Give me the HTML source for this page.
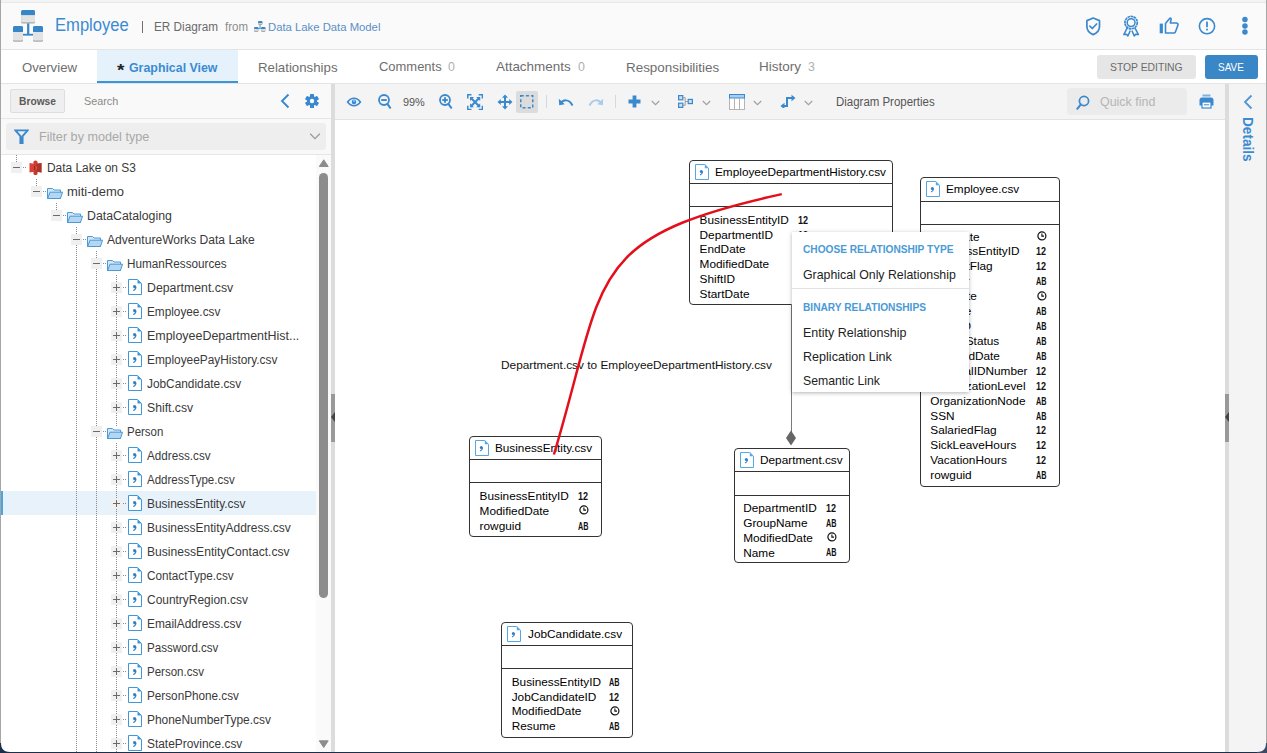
<!DOCTYPE html>
<html><head><meta charset="utf-8"><style>
html,body{margin:0;padding:0;width:1267px;height:753px;overflow:hidden;background:#fff}
body{position:relative;font-family:"Liberation Sans",sans-serif}
.a{position:absolute;display:block}
.t{position:absolute;white-space:nowrap;transform-origin:0 50%}
</style></head><body>
<div class="a" style="left:0px;top:0px;width:1267px;height:753px;background:#1b2f4a;"></div>
<div class="a" style="left:0;top:0;width:1267px;height:752px;background:#fafafa;border-radius:0 0 8px 8px;overflow:hidden">
<div class="a" style="left:0px;top:0px;width:1267px;height:2px;background:#f3f3f3;"></div>
<div class="a" style="left:0px;top:2px;width:1267px;height:1px;background:#e8e8e8;"></div>
<div class="a" style="left:0px;top:3px;width:1267px;height:46px;background:#fafafa;"></div>
<div class="a" style="left:0px;top:49px;width:1267px;height:1px;background:#e4e4e4;"></div>
<div class="a" style="left:0px;top:50px;width:1267px;height:33px;background:#ffffff;"></div>
<div class="a" style="left:0px;top:83px;width:1267px;height:1px;background:#e4e4e4;"></div>
<div class="a" style="left:0px;top:84px;width:331px;height:34px;background:#f9f9f9;"></div>
<div class="a" style="left:0px;top:118px;width:331px;height:1px;background:#e6e6e6;"></div>
<div class="a" style="left:0px;top:119px;width:331px;height:35px;background:#f9f9f9;"></div>
<div class="a" style="left:0px;top:154px;width:331px;height:1px;background:#e6e6e6;"></div>
<div class="a" style="left:0px;top:155px;width:331px;height:598px;background:#ffffff;"></div>
<div class="a" style="left:331px;top:84px;width:4px;height:669px;background:#dcdcdc;"></div>
<div class="a" style="left:335px;top:84px;width:890px;height:35px;background:#f4f4f4;"></div>
<div class="a" style="left:335px;top:119px;width:890px;height:1px;background:#e2e2e2;"></div>
<div class="a" style="left:335px;top:120px;width:890px;height:633px;background:#ffffff;"></div>
<div class="a" style="left:1225px;top:84px;width:4px;height:669px;background:#dcdcdc;"></div>
<div class="a" style="left:1229px;top:84px;width:38px;height:669px;background:#f4f4f4;"></div>
</div>
<div class="a" style="left:0px;top:0px;width:1px;height:745px;background:#a6a6a6;"></div>
<div class="a" style="left:1266px;top:0px;width:1px;height:745px;background:#a6a6a6;"></div>
<svg class="a" style="left:13px;top:10px;" width="30" height="32" viewBox="0 0 30 32"><rect x="8.2" y="0.1" width="13.8" height="13.3" rx="1.5" fill="#a9a9a9"/><rect x="8.2" y="0.1" width="13.8" height="12.100000000000001" rx="1.5" fill="#e3e3e3"/><path d="M8.2 5.1 h13.8 v-3.5 h-13.8 z" fill="#3786c8"/><rect x="8.2" y="0.1" width="13.8" height="5" rx="1.5" fill="#3786c8"/><rect x="0" y="15.9" width="10" height="15.8" rx="1.5" fill="#a9a9a9"/><rect x="0" y="15.9" width="10" height="14.600000000000001" rx="1.5" fill="#e3e3e3"/><path d="M0 21.9 h10 v-4.5 h-10 z" fill="#3786c8"/><rect x="0" y="15.9" width="10" height="6" rx="1.5" fill="#3786c8"/><rect x="20" y="15.9" width="10" height="15.8" rx="1.5" fill="#a9a9a9"/><rect x="20" y="15.9" width="10" height="14.600000000000001" rx="1.5" fill="#e3e3e3"/><path d="M20 21.9 h10 v-4.5 h-10 z" fill="#3786c8"/><rect x="20" y="15.9" width="10" height="6" rx="1.5" fill="#3786c8"/><rect x="14.1" y="13.4" width="2.2" height="10.6" fill="#3786c8"/><rect x="10" y="23.8" width="10" height="1.8" fill="#3786c8"/></svg>
<div class="t" style="left:55.20px;top:16px;font-size:18.00px;line-height:18.00px;color:#3a8bd2;transform:scaleX(0.9220);">Employee</div>
<div class="a" style="left:142px;top:21px;width:1.2px;height:12px;background:#707070;"></div>
<div class="t" style="left:153.50px;top:21px;font-size:12.50px;line-height:12.50px;color:#6a6a6a;transform:scaleX(0.9402);">ER Diagram</div>
<div class="t" style="left:225.30px;top:21px;font-size:12.20px;line-height:12.20px;color:#8c8c8c;transform:scaleX(0.9426);">from</div>
<svg class="a" style="left:254px;top:20.8px;" width="12" height="12" viewBox="0 0 12 12"><rect x="4" y="0" width="4.5" height="4" rx="1.5" fill="#a9a9a9"/><rect x="4" y="0" width="4.5" height="2.8" rx="1.5" fill="#e3e3e3"/><path d="M4 2 h4.5 v-0.5 h-4.5 z" fill="#3786c8"/><rect x="4" y="0" width="4.5" height="2" rx="1.5" fill="#3786c8"/><rect x="0" y="6" width="4.5" height="5" rx="1.5" fill="#a9a9a9"/><rect x="0" y="6" width="4.5" height="3.8" rx="1.5" fill="#e3e3e3"/><path d="M0 8 h4.5 v-0.5 h-4.5 z" fill="#3786c8"/><rect x="0" y="6" width="4.5" height="2" rx="1.5" fill="#3786c8"/><rect x="7" y="6" width="4.5" height="5" rx="1.5" fill="#a9a9a9"/><rect x="7" y="6" width="4.5" height="3.8" rx="1.5" fill="#e3e3e3"/><path d="M7 8 h4.5 v-0.5 h-4.5 z" fill="#3786c8"/><rect x="7" y="6" width="4.5" height="2" rx="1.5" fill="#3786c8"/><rect x="5.6" y="4" width="0.9" height="3" fill="#3786c8"/><rect x="2" y="7.3" width="7" height="0.8" fill="#3786c8"/></svg>
<div class="t" style="left:267.60px;top:22px;font-size:11.50px;line-height:11.50px;color:#5a8fc6;transform:scaleX(0.9823);">Data Lake Data Model</div>
<svg class="a" style="left:1085px;top:16px;" width="17" height="20" viewBox="0 0 17 20"><path d="M8.2 2 L14.5 4.6 V10.5 C14.5 14.5 11.7 17.2 8.2 18.6 C4.7 17.2 1.9 14.5 1.9 10.5 V4.6 Z" fill="none" stroke="#3a89cf" stroke-width="1.7" stroke-linejoin="round"/><path d="M4.9 10.2 L7.3 12.5 L11.6 8" fill="none" stroke="#3a89cf" stroke-width="1.7" stroke-linecap="round" stroke-linejoin="round"/></svg>
<svg class="a" style="left:1121px;top:15px;" width="20" height="22" viewBox="0 0 20 22"><circle cx="10.1" cy="7.6" r="6.2" fill="none" stroke="#3a89cf" stroke-width="1.7" stroke-dasharray="2.6 0.5"/><circle cx="10.1" cy="7.6" r="3.9" fill="none" stroke="#3a89cf" stroke-width="1.5"/><path d="M6.4 12.6 L2.8 19.6 L5.6 19.2 L6.9 21 L9.3 15.6 M13.8 12.6 L17.4 19.6 L14.6 19.2 L13.3 21 L10.9 15.6" fill="none" stroke="#3a89cf" stroke-width="1.5" stroke-linejoin="round"/></svg>
<svg class="a" style="left:1159px;top:16px;" width="21" height="19" viewBox="0 0 21 19"><rect x="0.7" y="7.6" width="3.2" height="9.7" fill="#3a89cf"/><path d="M6.5 17 V7.6 L10.6 2.6 C11.3 1.8 12.3 2.3 12.1 3.4 L11.4 7 H17.3 C18.6 7 19.3 8.2 18.9 9.3 L16.3 16.2 C16 16.8 15.5 17 14.9 17 Z" fill="none" stroke="#3a89cf" stroke-width="1.6" stroke-linejoin="round"/></svg>
<svg class="a" style="left:1197px;top:16px;" width="20" height="20" viewBox="0 0 20 20"><circle cx="10" cy="10.2" r="7.6" fill="none" stroke="#3a89cf" stroke-width="1.6"/><rect x="9.1" y="5.6" width="1.8" height="5.6" rx="0.5" fill="#3a89cf"/><rect x="9.1" y="12.6" width="1.8" height="1.8" rx="0.5" fill="#3a89cf"/></svg>
<svg class="a" style="left:1240px;top:15px;" width="10" height="22" viewBox="0 0 10 22"><circle cx="4.95" cy="4.6" r="2.75" fill="#3a89cf"/><circle cx="4.95" cy="10.9" r="2.75" fill="#3a89cf"/><circle cx="4.95" cy="17.1" r="2.75" fill="#3a89cf"/></svg>
<div class="a" style="left:97px;top:50px;width:141px;height:33px;background:#e6f2fb;"></div>
<div class="a" style="left:97px;top:81px;width:141px;height:2px;background:#3d95d8;"></div>
<div class="t" style="left:21.70px;top:61px;font-size:13.00px;line-height:13.00px;color:#6e6e6e;transform:scaleX(1.0152);">Overview</div>
<div class="t" style="left:116.80px;top:63px;font-size:16.00px;line-height:16.00px;color:#222;font-weight:bold;transform:scaleX(1.1885);">*</div>
<div class="t" style="left:129.30px;top:61px;font-size:13.00px;line-height:13.00px;color:#3a8bd2;font-weight:bold;transform:scaleX(0.9517);">Graphical View</div>
<div class="t" style="left:258.30px;top:61px;font-size:13.00px;line-height:13.00px;color:#6e6e6e;transform:scaleX(1.0187);">Relationships</div>
<div class="t" style="left:379.20px;top:60px;font-size:13.00px;line-height:13.00px;color:#6e6e6e;transform:scaleX(0.9961);">Comments</div>
<div class="t" style="left:448.30px;top:60px;font-size:13.00px;line-height:13.00px;color:#b0b0b0;transform:scaleX(0.9544);">0</div>
<div class="t" style="left:495.90px;top:60px;font-size:13.00px;line-height:13.00px;color:#6e6e6e;transform:scaleX(1.0324);">Attachments</div>
<div class="t" style="left:578.00px;top:60px;font-size:13.00px;line-height:13.00px;color:#b0b0b0;transform:scaleX(0.9544);">0</div>
<div class="t" style="left:625.50px;top:61px;font-size:13.00px;line-height:13.00px;color:#6e6e6e;transform:scaleX(1.0319);">Responsibilities</div>
<div class="t" style="left:759.20px;top:60px;font-size:13.00px;line-height:13.00px;color:#6e6e6e;transform:scaleX(1.0384);">History</div>
<div class="t" style="left:808.00px;top:60px;font-size:13.00px;line-height:13.00px;color:#b0b0b0;transform:scaleX(0.9544);">3</div>
<div class="a" style="left:1097px;top:55px;width:99px;height:24px;background:#e6e6e6;border-radius:3px;"></div>
<div class="t" style="left:1110.30px;top:62px;font-size:11.50px;line-height:11.50px;color:#6b6b6b;transform:scaleX(0.8996);">STOP EDITING</div>
<div class="a" style="left:1205px;top:55px;width:53px;height:24px;background:#3a87c7;border-radius:3px;"></div>
<div class="t" style="left:1217.80px;top:62px;font-size:11.50px;line-height:11.50px;color:#ffffff;transform:scaleX(0.8670);">SAVE</div>
<div class="a" style="left:10px;top:89px;width:55px;height:24px;background:#efefef;border:1px solid #dedede;box-sizing:border-box;border-radius:2px;"></div>
<div class="t" style="left:19.00px;top:96px;font-size:11.50px;line-height:11.50px;color:#5a5a5a;font-weight:bold;transform:scaleX(0.8907);">Browse</div>
<div class="t" style="left:83.90px;top:96px;font-size:11.50px;line-height:11.50px;color:#8a8a8a;transform:scaleX(0.9413);">Search</div>
<svg class="a" style="left:279px;top:92px;" width="12" height="18" viewBox="0 0 12 18"><path d="M9.5 2.5 L3 9 L9.5 15.5" fill="none" stroke="#3a89cf" stroke-width="1.9" stroke-linejoin="miter"/></svg>
<svg class="a" style="left:305px;top:94px;" width="14" height="14" viewBox="0 0 14 14"><g transform="translate(7,7)"><rect x="-2" y="-7" width="4" height="4" rx="0.5" fill="#3a89cf" transform="rotate(0)"/><rect x="-2" y="-7" width="4" height="4" rx="0.5" fill="#3a89cf" transform="rotate(60)"/><rect x="-2" y="-7" width="4" height="4" rx="0.5" fill="#3a89cf" transform="rotate(120)"/><rect x="-2" y="-7" width="4" height="4" rx="0.5" fill="#3a89cf" transform="rotate(180)"/><rect x="-2" y="-7" width="4" height="4" rx="0.5" fill="#3a89cf" transform="rotate(240)"/><rect x="-2" y="-7" width="4" height="4" rx="0.5" fill="#3a89cf" transform="rotate(300)"/><circle r="5.1" fill="#3a89cf"/><circle r="2.2" fill="#f9f9f9"/></g></svg>
<div class="a" style="left:6px;top:123px;width:320px;height:27px;background:#eeeeee;border-radius:3px;"></div>
<svg class="a" style="left:13.5px;top:128.5px;" width="15" height="15" viewBox="0 0 15 15"><path d="M1.4 1.4 H13.6 L8.6 7.2 V14 H6.4 V7.2 Z" fill="none" stroke="#3a89cf" stroke-width="1.9" stroke-linejoin="miter"/><rect x="6.4" y="7.5" width="2.2" height="6.5" fill="#3a89cf"/></svg>
<div class="t" style="left:38.50px;top:131px;font-size:12.20px;line-height:12.20px;color:#a8a8a8;transform:scaleX(1.0371);">Filter by model type</div>
<svg class="a" style="left:309px;top:132px;" width="12" height="9" viewBox="0 0 12 9"><path d="M1.2 1.8 L6 6.6 L10.8 1.8" fill="none" stroke="#9a9a9a" stroke-width="1.3"/></svg>
<div class="a" style="left:3px;top:491px;width:313px;height:24px;background:#e7f2fb;"></div>
<div class="a" style="left:1px;top:491px;width:2px;height:24px;background:#4aa6df;"></div>
<div class="a" style="left:16px;top:155px;width:1px;height:7px;background:repeating-linear-gradient(to bottom,#8a8a8a 0,#8a8a8a 1px,transparent 1px,transparent 2px)"></div>
<div class="a" style="left:36px;top:179px;width:1px;height:7px;background:repeating-linear-gradient(to bottom,#8a8a8a 0,#8a8a8a 1px,transparent 1px,transparent 2px)"></div>
<div class="a" style="left:56px;top:203px;width:1px;height:7px;background:repeating-linear-gradient(to bottom,#8a8a8a 0,#8a8a8a 1px,transparent 1px,transparent 2px)"></div>
<div class="a" style="left:76px;top:227px;width:1px;height:7px;background:repeating-linear-gradient(to bottom,#8a8a8a 0,#8a8a8a 1px,transparent 1px,transparent 2px)"></div>
<div class="a" style="left:76px;top:245px;width:1px;height:508px;background:repeating-linear-gradient(to bottom,#8a8a8a 0,#8a8a8a 1px,transparent 1px,transparent 2px)"></div>
<div class="a" style="left:96px;top:251px;width:1px;height:7px;background:repeating-linear-gradient(to bottom,#8a8a8a 0,#8a8a8a 1px,transparent 1px,transparent 2px)"></div>
<div class="a" style="left:96px;top:269px;width:1px;height:484px;background:repeating-linear-gradient(to bottom,#8a8a8a 0,#8a8a8a 1px,transparent 1px,transparent 2px)"></div>
<div class="a" style="left:116px;top:275px;width:1px;height:151px;background:repeating-linear-gradient(to bottom,#8a8a8a 0,#8a8a8a 1px,transparent 1px,transparent 2px)"></div>
<div class="a" style="left:116px;top:443px;width:1px;height:310px;background:repeating-linear-gradient(to bottom,#8a8a8a 0,#8a8a8a 1px,transparent 1px,transparent 2px)"></div>
<div class="a" style="left:11px;top:162.0px;width:11px;height:11px;background:#f0f0f0;"></div>
<div class="a" style="left:13px;top:167.0px;width:7px;height:1px;background:#6a6a6a;"></div>
<div class="a" style="left:23px;top:167px;width:4px;height:1px;background:repeating-linear-gradient(to right,#8a8a8a 0,#8a8a8a 1px,transparent 1px,transparent 2px)"></div>
<svg class="a" style="left:28.5px;top:159.5px;" width="14" height="16" viewBox="0 0 14 16"><path d="M0.5 3 Q6.5 4.6 12.5 3 V12.5 Q6.5 10.9 0.5 12.5 Z" fill="#d8413a"/><path d="M6.5 3.8 Q9.5 3.8 12.5 3 V12.5 Q9.5 11.7 6.5 11.7 Z" fill="#a9342b"/><circle cx="6.5" cy="2.7" r="2.2" fill="#cf3b33"/><circle cx="6.5" cy="12.9" r="2.2" fill="#c4372f"/><path d="M5 5.8 h3.2 v4 h-3.2 z" fill="#8f2a22"/><path d="M6.3 5.8 h1.9 v4 h-1.9 z" fill="#e2493f"/></svg>
<div class="t" style="left:46.70px;top:162px;font-size:12.00px;line-height:12.00px;color:#3a3a3a;transform:scaleX(0.9933);">Data Lake on S3</div>
<div class="a" style="left:31px;top:186.0px;width:11px;height:11px;background:#f0f0f0;"></div>
<div class="a" style="left:33px;top:191.0px;width:7px;height:1px;background:#6a6a6a;"></div>
<div class="a" style="left:43px;top:191px;width:4px;height:1px;background:repeating-linear-gradient(to right,#8a8a8a 0,#8a8a8a 1px,transparent 1px,transparent 2px)"></div>
<svg class="a" style="left:47px;top:186.5px;" width="16" height="12" viewBox="0 0 16 12"><path d="M0.5 1.5 H5.5 L7 3 H13.5 V11.5 H0.5 Z" fill="#d3e6f6" stroke="#4a9ad8" stroke-width="1" stroke-linejoin="round"/><path d="M3 5.2 H15.6 L13.4 11.5 H0.6 Z" fill="#b5d6f2" stroke="#4a9ad8" stroke-width="1" stroke-linejoin="round"/></svg>
<div class="t" style="left:66.70px;top:186px;font-size:12.00px;line-height:12.00px;color:#3a3a3a;transform:scaleX(1.0821);">miti-demo</div>
<div class="a" style="left:51px;top:210.0px;width:11px;height:11px;background:#f0f0f0;"></div>
<div class="a" style="left:53px;top:215.0px;width:7px;height:1px;background:#6a6a6a;"></div>
<div class="a" style="left:63px;top:215px;width:4px;height:1px;background:repeating-linear-gradient(to right,#8a8a8a 0,#8a8a8a 1px,transparent 1px,transparent 2px)"></div>
<svg class="a" style="left:67px;top:210.5px;" width="16" height="12" viewBox="0 0 16 12"><path d="M0.5 1.5 H5.5 L7 3 H13.5 V11.5 H0.5 Z" fill="#d3e6f6" stroke="#4a9ad8" stroke-width="1" stroke-linejoin="round"/><path d="M3 5.2 H15.6 L13.4 11.5 H0.6 Z" fill="#b5d6f2" stroke="#4a9ad8" stroke-width="1" stroke-linejoin="round"/></svg>
<div class="t" style="left:86.70px;top:210px;font-size:12.00px;line-height:12.00px;color:#3a3a3a;transform:scaleX(1.0263);">DataCataloging</div>
<div class="a" style="left:71px;top:234.0px;width:11px;height:11px;background:#f0f0f0;"></div>
<div class="a" style="left:73px;top:239.0px;width:7px;height:1px;background:#6a6a6a;"></div>
<div class="a" style="left:83px;top:239px;width:4px;height:1px;background:repeating-linear-gradient(to right,#8a8a8a 0,#8a8a8a 1px,transparent 1px,transparent 2px)"></div>
<svg class="a" style="left:87px;top:234.5px;" width="16" height="12" viewBox="0 0 16 12"><path d="M0.5 1.5 H5.5 L7 3 H13.5 V11.5 H0.5 Z" fill="#d3e6f6" stroke="#4a9ad8" stroke-width="1" stroke-linejoin="round"/><path d="M3 5.2 H15.6 L13.4 11.5 H0.6 Z" fill="#b5d6f2" stroke="#4a9ad8" stroke-width="1" stroke-linejoin="round"/></svg>
<div class="t" style="left:106.70px;top:234px;font-size:12.00px;line-height:12.00px;color:#3a3a3a;transform:scaleX(1.0079);">AdventureWorks Data Lake</div>
<div class="a" style="left:91px;top:258.0px;width:11px;height:11px;background:#f0f0f0;"></div>
<div class="a" style="left:93px;top:263.0px;width:7px;height:1px;background:#6a6a6a;"></div>
<div class="a" style="left:103px;top:263px;width:4px;height:1px;background:repeating-linear-gradient(to right,#8a8a8a 0,#8a8a8a 1px,transparent 1px,transparent 2px)"></div>
<svg class="a" style="left:107px;top:258.5px;" width="16" height="12" viewBox="0 0 16 12"><path d="M0.5 1.5 H5.5 L7 3 H13.5 V11.5 H0.5 Z" fill="#d3e6f6" stroke="#4a9ad8" stroke-width="1" stroke-linejoin="round"/><path d="M3 5.2 H15.6 L13.4 11.5 H0.6 Z" fill="#b5d6f2" stroke="#4a9ad8" stroke-width="1" stroke-linejoin="round"/></svg>
<div class="t" style="left:126.70px;top:258px;font-size:12.00px;line-height:12.00px;color:#3a3a3a;transform:scaleX(0.9771);">HumanRessources</div>
<div class="a" style="left:111px;top:282.0px;width:11px;height:11px;background:#f0f0f0;"></div>
<div class="a" style="left:113px;top:287.0px;width:7px;height:1px;background:#6a6a6a;"></div>
<div class="a" style="left:116px;top:284.0px;width:1px;height:7px;background:#6a6a6a;"></div>
<div class="a" style="left:123px;top:287px;width:4px;height:1px;background:repeating-linear-gradient(to right,#8a8a8a 0,#8a8a8a 1px,transparent 1px,transparent 2px)"></div>
<svg class="a" style="left:128px;top:279.0px;" width="14" height="16" viewBox="0 0 14 16"><path d="M0.5 0.5 H9.5 L13.5 4.5 V15.5 H0.5 Z" fill="#fff" stroke="#3d97d9" stroke-width="1"/><path d="M9.5 0.5 L13.5 4.5 H9.5 Z" fill="#3d97d9"/><circle cx="6.6" cy="7.6" r="1.6" fill="#2f7fc4"/><path d="M7.9 8 C7.8 10 6.8 11 5.2 11.5" fill="none" stroke="#2f7fc4" stroke-width="1.2"/></svg>
<div class="t" style="left:146.70px;top:282px;font-size:12.00px;line-height:12.00px;color:#3a3a3a;transform:scaleX(1.0258);">Department.csv</div>
<div class="a" style="left:111px;top:306.0px;width:11px;height:11px;background:#f0f0f0;"></div>
<div class="a" style="left:113px;top:311.0px;width:7px;height:1px;background:#6a6a6a;"></div>
<div class="a" style="left:116px;top:308.0px;width:1px;height:7px;background:#6a6a6a;"></div>
<div class="a" style="left:123px;top:311px;width:4px;height:1px;background:repeating-linear-gradient(to right,#8a8a8a 0,#8a8a8a 1px,transparent 1px,transparent 2px)"></div>
<svg class="a" style="left:128px;top:303.0px;" width="14" height="16" viewBox="0 0 14 16"><path d="M0.5 0.5 H9.5 L13.5 4.5 V15.5 H0.5 Z" fill="#fff" stroke="#3d97d9" stroke-width="1"/><path d="M9.5 0.5 L13.5 4.5 H9.5 Z" fill="#3d97d9"/><circle cx="6.6" cy="7.6" r="1.6" fill="#2f7fc4"/><path d="M7.9 8 C7.8 10 6.8 11 5.2 11.5" fill="none" stroke="#2f7fc4" stroke-width="1.2"/></svg>
<div class="t" style="left:146.70px;top:306px;font-size:12.00px;line-height:12.00px;color:#3a3a3a;transform:scaleX(0.9813);">Employee.csv</div>
<div class="a" style="left:111px;top:330.0px;width:11px;height:11px;background:#f0f0f0;"></div>
<div class="a" style="left:113px;top:335.0px;width:7px;height:1px;background:#6a6a6a;"></div>
<div class="a" style="left:116px;top:332.0px;width:1px;height:7px;background:#6a6a6a;"></div>
<div class="a" style="left:123px;top:335px;width:4px;height:1px;background:repeating-linear-gradient(to right,#8a8a8a 0,#8a8a8a 1px,transparent 1px,transparent 2px)"></div>
<svg class="a" style="left:128px;top:327.0px;" width="14" height="16" viewBox="0 0 14 16"><path d="M0.5 0.5 H9.5 L13.5 4.5 V15.5 H0.5 Z" fill="#fff" stroke="#3d97d9" stroke-width="1"/><path d="M9.5 0.5 L13.5 4.5 H9.5 Z" fill="#3d97d9"/><circle cx="6.6" cy="7.6" r="1.6" fill="#2f7fc4"/><path d="M7.9 8 C7.8 10 6.8 11 5.2 11.5" fill="none" stroke="#2f7fc4" stroke-width="1.2"/></svg>
<div class="t" style="left:146.70px;top:330px;font-size:12.00px;line-height:12.00px;color:#3a3a3a;transform:scaleX(1.0380);">EmployeeDepartmentHist...</div>
<div class="a" style="left:111px;top:354.0px;width:11px;height:11px;background:#f0f0f0;"></div>
<div class="a" style="left:113px;top:359.0px;width:7px;height:1px;background:#6a6a6a;"></div>
<div class="a" style="left:116px;top:356.0px;width:1px;height:7px;background:#6a6a6a;"></div>
<div class="a" style="left:123px;top:359px;width:4px;height:1px;background:repeating-linear-gradient(to right,#8a8a8a 0,#8a8a8a 1px,transparent 1px,transparent 2px)"></div>
<svg class="a" style="left:128px;top:351.0px;" width="14" height="16" viewBox="0 0 14 16"><path d="M0.5 0.5 H9.5 L13.5 4.5 V15.5 H0.5 Z" fill="#fff" stroke="#3d97d9" stroke-width="1"/><path d="M9.5 0.5 L13.5 4.5 H9.5 Z" fill="#3d97d9"/><circle cx="6.6" cy="7.6" r="1.6" fill="#2f7fc4"/><path d="M7.9 8 C7.8 10 6.8 11 5.2 11.5" fill="none" stroke="#2f7fc4" stroke-width="1.2"/></svg>
<div class="t" style="left:146.70px;top:354px;font-size:12.00px;line-height:12.00px;color:#3a3a3a;transform:scaleX(0.9894);">EmployeePayHistory.csv</div>
<div class="a" style="left:111px;top:378.0px;width:11px;height:11px;background:#f0f0f0;"></div>
<div class="a" style="left:113px;top:383.0px;width:7px;height:1px;background:#6a6a6a;"></div>
<div class="a" style="left:116px;top:380.0px;width:1px;height:7px;background:#6a6a6a;"></div>
<div class="a" style="left:123px;top:383px;width:4px;height:1px;background:repeating-linear-gradient(to right,#8a8a8a 0,#8a8a8a 1px,transparent 1px,transparent 2px)"></div>
<svg class="a" style="left:128px;top:375.0px;" width="14" height="16" viewBox="0 0 14 16"><path d="M0.5 0.5 H9.5 L13.5 4.5 V15.5 H0.5 Z" fill="#fff" stroke="#3d97d9" stroke-width="1"/><path d="M9.5 0.5 L13.5 4.5 H9.5 Z" fill="#3d97d9"/><circle cx="6.6" cy="7.6" r="1.6" fill="#2f7fc4"/><path d="M7.9 8 C7.8 10 6.8 11 5.2 11.5" fill="none" stroke="#2f7fc4" stroke-width="1.2"/></svg>
<div class="t" style="left:146.70px;top:378px;font-size:12.00px;line-height:12.00px;color:#3a3a3a;transform:scaleX(0.9875);">JobCandidate.csv</div>
<div class="a" style="left:111px;top:402.0px;width:11px;height:11px;background:#f0f0f0;"></div>
<div class="a" style="left:113px;top:407.0px;width:7px;height:1px;background:#6a6a6a;"></div>
<div class="a" style="left:116px;top:404.0px;width:1px;height:7px;background:#6a6a6a;"></div>
<div class="a" style="left:123px;top:407px;width:4px;height:1px;background:repeating-linear-gradient(to right,#8a8a8a 0,#8a8a8a 1px,transparent 1px,transparent 2px)"></div>
<svg class="a" style="left:128px;top:399.0px;" width="14" height="16" viewBox="0 0 14 16"><path d="M0.5 0.5 H9.5 L13.5 4.5 V15.5 H0.5 Z" fill="#fff" stroke="#3d97d9" stroke-width="1"/><path d="M9.5 0.5 L13.5 4.5 H9.5 Z" fill="#3d97d9"/><circle cx="6.6" cy="7.6" r="1.6" fill="#2f7fc4"/><path d="M7.9 8 C7.8 10 6.8 11 5.2 11.5" fill="none" stroke="#2f7fc4" stroke-width="1.2"/></svg>
<div class="t" style="left:146.70px;top:402px;font-size:12.00px;line-height:12.00px;color:#3a3a3a;transform:scaleX(1.0188);">Shift.csv</div>
<div class="a" style="left:91px;top:426.0px;width:11px;height:11px;background:#f0f0f0;"></div>
<div class="a" style="left:93px;top:431.0px;width:7px;height:1px;background:#6a6a6a;"></div>
<div class="a" style="left:103px;top:431px;width:4px;height:1px;background:repeating-linear-gradient(to right,#8a8a8a 0,#8a8a8a 1px,transparent 1px,transparent 2px)"></div>
<svg class="a" style="left:107px;top:426.5px;" width="16" height="12" viewBox="0 0 16 12"><path d="M0.5 1.5 H5.5 L7 3 H13.5 V11.5 H0.5 Z" fill="#d3e6f6" stroke="#4a9ad8" stroke-width="1" stroke-linejoin="round"/><path d="M3 5.2 H15.6 L13.4 11.5 H0.6 Z" fill="#b5d6f2" stroke="#4a9ad8" stroke-width="1" stroke-linejoin="round"/></svg>
<div class="t" style="left:126.70px;top:426px;font-size:12.00px;line-height:12.00px;color:#3a3a3a;transform:scaleX(0.9547);">Person</div>
<div class="a" style="left:111px;top:450.0px;width:11px;height:11px;background:#f0f0f0;"></div>
<div class="a" style="left:113px;top:455.0px;width:7px;height:1px;background:#6a6a6a;"></div>
<div class="a" style="left:116px;top:452.0px;width:1px;height:7px;background:#6a6a6a;"></div>
<div class="a" style="left:123px;top:455px;width:4px;height:1px;background:repeating-linear-gradient(to right,#8a8a8a 0,#8a8a8a 1px,transparent 1px,transparent 2px)"></div>
<svg class="a" style="left:128px;top:447.0px;" width="14" height="16" viewBox="0 0 14 16"><path d="M0.5 0.5 H9.5 L13.5 4.5 V15.5 H0.5 Z" fill="#fff" stroke="#3d97d9" stroke-width="1"/><path d="M9.5 0.5 L13.5 4.5 H9.5 Z" fill="#3d97d9"/><circle cx="6.6" cy="7.6" r="1.6" fill="#2f7fc4"/><path d="M7.9 8 C7.8 10 6.8 11 5.2 11.5" fill="none" stroke="#2f7fc4" stroke-width="1.2"/></svg>
<div class="t" style="left:146.70px;top:450px;font-size:12.00px;line-height:12.00px;color:#3a3a3a;transform:scaleX(0.9731);">Address.csv</div>
<div class="a" style="left:111px;top:474.0px;width:11px;height:11px;background:#f0f0f0;"></div>
<div class="a" style="left:113px;top:479.0px;width:7px;height:1px;background:#6a6a6a;"></div>
<div class="a" style="left:116px;top:476.0px;width:1px;height:7px;background:#6a6a6a;"></div>
<div class="a" style="left:123px;top:479px;width:4px;height:1px;background:repeating-linear-gradient(to right,#8a8a8a 0,#8a8a8a 1px,transparent 1px,transparent 2px)"></div>
<svg class="a" style="left:128px;top:471.0px;" width="14" height="16" viewBox="0 0 14 16"><path d="M0.5 0.5 H9.5 L13.5 4.5 V15.5 H0.5 Z" fill="#fff" stroke="#3d97d9" stroke-width="1"/><path d="M9.5 0.5 L13.5 4.5 H9.5 Z" fill="#3d97d9"/><circle cx="6.6" cy="7.6" r="1.6" fill="#2f7fc4"/><path d="M7.9 8 C7.8 10 6.8 11 5.2 11.5" fill="none" stroke="#2f7fc4" stroke-width="1.2"/></svg>
<div class="t" style="left:146.70px;top:474px;font-size:12.00px;line-height:12.00px;color:#3a3a3a;transform:scaleX(0.9605);">AddressType.csv</div>
<div class="a" style="left:111px;top:498.0px;width:11px;height:11px;background:#f0f0f0;"></div>
<div class="a" style="left:113px;top:503.0px;width:7px;height:1px;background:#6a6a6a;"></div>
<div class="a" style="left:116px;top:500.0px;width:1px;height:7px;background:#6a6a6a;"></div>
<div class="a" style="left:123px;top:503px;width:4px;height:1px;background:repeating-linear-gradient(to right,#8a8a8a 0,#8a8a8a 1px,transparent 1px,transparent 2px)"></div>
<svg class="a" style="left:128px;top:495.0px;" width="14" height="16" viewBox="0 0 14 16"><path d="M0.5 0.5 H9.5 L13.5 4.5 V15.5 H0.5 Z" fill="#fff" stroke="#3d97d9" stroke-width="1"/><path d="M9.5 0.5 L13.5 4.5 H9.5 Z" fill="#3d97d9"/><circle cx="6.6" cy="7.6" r="1.6" fill="#2f7fc4"/><path d="M7.9 8 C7.8 10 6.8 11 5.2 11.5" fill="none" stroke="#2f7fc4" stroke-width="1.2"/></svg>
<div class="t" style="left:146.70px;top:498px;font-size:12.00px;line-height:12.00px;color:#3a3a3a;transform:scaleX(0.9926);">BusinessEntity.csv</div>
<div class="a" style="left:111px;top:522.0px;width:11px;height:11px;background:#f0f0f0;"></div>
<div class="a" style="left:113px;top:527.0px;width:7px;height:1px;background:#6a6a6a;"></div>
<div class="a" style="left:116px;top:524.0px;width:1px;height:7px;background:#6a6a6a;"></div>
<div class="a" style="left:123px;top:527px;width:4px;height:1px;background:repeating-linear-gradient(to right,#8a8a8a 0,#8a8a8a 1px,transparent 1px,transparent 2px)"></div>
<svg class="a" style="left:128px;top:519.0px;" width="14" height="16" viewBox="0 0 14 16"><path d="M0.5 0.5 H9.5 L13.5 4.5 V15.5 H0.5 Z" fill="#fff" stroke="#3d97d9" stroke-width="1"/><path d="M9.5 0.5 L13.5 4.5 H9.5 Z" fill="#3d97d9"/><circle cx="6.6" cy="7.6" r="1.6" fill="#2f7fc4"/><path d="M7.9 8 C7.8 10 6.8 11 5.2 11.5" fill="none" stroke="#2f7fc4" stroke-width="1.2"/></svg>
<div class="t" style="left:146.70px;top:522px;font-size:12.00px;line-height:12.00px;color:#3a3a3a;transform:scaleX(0.9975);">BusinessEntityAddress.csv</div>
<div class="a" style="left:111px;top:546.0px;width:11px;height:11px;background:#f0f0f0;"></div>
<div class="a" style="left:113px;top:551.0px;width:7px;height:1px;background:#6a6a6a;"></div>
<div class="a" style="left:116px;top:548.0px;width:1px;height:7px;background:#6a6a6a;"></div>
<div class="a" style="left:123px;top:551px;width:4px;height:1px;background:repeating-linear-gradient(to right,#8a8a8a 0,#8a8a8a 1px,transparent 1px,transparent 2px)"></div>
<svg class="a" style="left:128px;top:543.0px;" width="14" height="16" viewBox="0 0 14 16"><path d="M0.5 0.5 H9.5 L13.5 4.5 V15.5 H0.5 Z" fill="#fff" stroke="#3d97d9" stroke-width="1"/><path d="M9.5 0.5 L13.5 4.5 H9.5 Z" fill="#3d97d9"/><circle cx="6.6" cy="7.6" r="1.6" fill="#2f7fc4"/><path d="M7.9 8 C7.8 10 6.8 11 5.2 11.5" fill="none" stroke="#2f7fc4" stroke-width="1.2"/></svg>
<div class="t" style="left:146.70px;top:546px;font-size:12.00px;line-height:12.00px;color:#3a3a3a;transform:scaleX(1.0085);">BusinessEntityContact.csv</div>
<div class="a" style="left:111px;top:570.0px;width:11px;height:11px;background:#f0f0f0;"></div>
<div class="a" style="left:113px;top:575.0px;width:7px;height:1px;background:#6a6a6a;"></div>
<div class="a" style="left:116px;top:572.0px;width:1px;height:7px;background:#6a6a6a;"></div>
<div class="a" style="left:123px;top:575px;width:4px;height:1px;background:repeating-linear-gradient(to right,#8a8a8a 0,#8a8a8a 1px,transparent 1px,transparent 2px)"></div>
<svg class="a" style="left:128px;top:567.0px;" width="14" height="16" viewBox="0 0 14 16"><path d="M0.5 0.5 H9.5 L13.5 4.5 V15.5 H0.5 Z" fill="#fff" stroke="#3d97d9" stroke-width="1"/><path d="M9.5 0.5 L13.5 4.5 H9.5 Z" fill="#3d97d9"/><circle cx="6.6" cy="7.6" r="1.6" fill="#2f7fc4"/><path d="M7.9 8 C7.8 10 6.8 11 5.2 11.5" fill="none" stroke="#2f7fc4" stroke-width="1.2"/></svg>
<div class="t" style="left:146.70px;top:570px;font-size:12.00px;line-height:12.00px;color:#3a3a3a;transform:scaleX(0.9769);">ContactType.csv</div>
<div class="a" style="left:111px;top:594.0px;width:11px;height:11px;background:#f0f0f0;"></div>
<div class="a" style="left:113px;top:599.0px;width:7px;height:1px;background:#6a6a6a;"></div>
<div class="a" style="left:116px;top:596.0px;width:1px;height:7px;background:#6a6a6a;"></div>
<div class="a" style="left:123px;top:599px;width:4px;height:1px;background:repeating-linear-gradient(to right,#8a8a8a 0,#8a8a8a 1px,transparent 1px,transparent 2px)"></div>
<svg class="a" style="left:128px;top:591.0px;" width="14" height="16" viewBox="0 0 14 16"><path d="M0.5 0.5 H9.5 L13.5 4.5 V15.5 H0.5 Z" fill="#fff" stroke="#3d97d9" stroke-width="1"/><path d="M9.5 0.5 L13.5 4.5 H9.5 Z" fill="#3d97d9"/><circle cx="6.6" cy="7.6" r="1.6" fill="#2f7fc4"/><path d="M7.9 8 C7.8 10 6.8 11 5.2 11.5" fill="none" stroke="#2f7fc4" stroke-width="1.2"/></svg>
<div class="t" style="left:146.70px;top:594px;font-size:12.00px;line-height:12.00px;color:#3a3a3a;transform:scaleX(0.9953);">CountryRegion.csv</div>
<div class="a" style="left:111px;top:618.0px;width:11px;height:11px;background:#f0f0f0;"></div>
<div class="a" style="left:113px;top:623.0px;width:7px;height:1px;background:#6a6a6a;"></div>
<div class="a" style="left:116px;top:620.0px;width:1px;height:7px;background:#6a6a6a;"></div>
<div class="a" style="left:123px;top:623px;width:4px;height:1px;background:repeating-linear-gradient(to right,#8a8a8a 0,#8a8a8a 1px,transparent 1px,transparent 2px)"></div>
<svg class="a" style="left:128px;top:615.0px;" width="14" height="16" viewBox="0 0 14 16"><path d="M0.5 0.5 H9.5 L13.5 4.5 V15.5 H0.5 Z" fill="#fff" stroke="#3d97d9" stroke-width="1"/><path d="M9.5 0.5 L13.5 4.5 H9.5 Z" fill="#3d97d9"/><circle cx="6.6" cy="7.6" r="1.6" fill="#2f7fc4"/><path d="M7.9 8 C7.8 10 6.8 11 5.2 11.5" fill="none" stroke="#2f7fc4" stroke-width="1.2"/></svg>
<div class="t" style="left:146.70px;top:618px;font-size:12.00px;line-height:12.00px;color:#3a3a3a;transform:scaleX(0.9899);">EmailAddress.csv</div>
<div class="a" style="left:111px;top:642.0px;width:11px;height:11px;background:#f0f0f0;"></div>
<div class="a" style="left:113px;top:647.0px;width:7px;height:1px;background:#6a6a6a;"></div>
<div class="a" style="left:116px;top:644.0px;width:1px;height:7px;background:#6a6a6a;"></div>
<div class="a" style="left:123px;top:647px;width:4px;height:1px;background:repeating-linear-gradient(to right,#8a8a8a 0,#8a8a8a 1px,transparent 1px,transparent 2px)"></div>
<svg class="a" style="left:128px;top:639.0px;" width="14" height="16" viewBox="0 0 14 16"><path d="M0.5 0.5 H9.5 L13.5 4.5 V15.5 H0.5 Z" fill="#fff" stroke="#3d97d9" stroke-width="1"/><path d="M9.5 0.5 L13.5 4.5 H9.5 Z" fill="#3d97d9"/><circle cx="6.6" cy="7.6" r="1.6" fill="#2f7fc4"/><path d="M7.9 8 C7.8 10 6.8 11 5.2 11.5" fill="none" stroke="#2f7fc4" stroke-width="1.2"/></svg>
<div class="t" style="left:146.70px;top:642px;font-size:12.00px;line-height:12.00px;color:#3a3a3a;transform:scaleX(0.9646);">Password.csv</div>
<div class="a" style="left:111px;top:666.0px;width:11px;height:11px;background:#f0f0f0;"></div>
<div class="a" style="left:113px;top:671.0px;width:7px;height:1px;background:#6a6a6a;"></div>
<div class="a" style="left:116px;top:668.0px;width:1px;height:7px;background:#6a6a6a;"></div>
<div class="a" style="left:123px;top:671px;width:4px;height:1px;background:repeating-linear-gradient(to right,#8a8a8a 0,#8a8a8a 1px,transparent 1px,transparent 2px)"></div>
<svg class="a" style="left:128px;top:663.0px;" width="14" height="16" viewBox="0 0 14 16"><path d="M0.5 0.5 H9.5 L13.5 4.5 V15.5 H0.5 Z" fill="#fff" stroke="#3d97d9" stroke-width="1"/><path d="M9.5 0.5 L13.5 4.5 H9.5 Z" fill="#3d97d9"/><circle cx="6.6" cy="7.6" r="1.6" fill="#2f7fc4"/><path d="M7.9 8 C7.8 10 6.8 11 5.2 11.5" fill="none" stroke="#2f7fc4" stroke-width="1.2"/></svg>
<div class="t" style="left:146.70px;top:666px;font-size:12.00px;line-height:12.00px;color:#3a3a3a;transform:scaleX(0.9603);">Person.csv</div>
<div class="a" style="left:111px;top:690.0px;width:11px;height:11px;background:#f0f0f0;"></div>
<div class="a" style="left:113px;top:695.0px;width:7px;height:1px;background:#6a6a6a;"></div>
<div class="a" style="left:116px;top:692.0px;width:1px;height:7px;background:#6a6a6a;"></div>
<div class="a" style="left:123px;top:695px;width:4px;height:1px;background:repeating-linear-gradient(to right,#8a8a8a 0,#8a8a8a 1px,transparent 1px,transparent 2px)"></div>
<svg class="a" style="left:128px;top:687.0px;" width="14" height="16" viewBox="0 0 14 16"><path d="M0.5 0.5 H9.5 L13.5 4.5 V15.5 H0.5 Z" fill="#fff" stroke="#3d97d9" stroke-width="1"/><path d="M9.5 0.5 L13.5 4.5 H9.5 Z" fill="#3d97d9"/><circle cx="6.6" cy="7.6" r="1.6" fill="#2f7fc4"/><path d="M7.9 8 C7.8 10 6.8 11 5.2 11.5" fill="none" stroke="#2f7fc4" stroke-width="1.2"/></svg>
<div class="t" style="left:146.70px;top:690px;font-size:12.00px;line-height:12.00px;color:#3a3a3a;transform:scaleX(0.9771);">PersonPhone.csv</div>
<div class="a" style="left:111px;top:714.0px;width:11px;height:11px;background:#f0f0f0;"></div>
<div class="a" style="left:113px;top:719.0px;width:7px;height:1px;background:#6a6a6a;"></div>
<div class="a" style="left:116px;top:716.0px;width:1px;height:7px;background:#6a6a6a;"></div>
<div class="a" style="left:123px;top:719px;width:4px;height:1px;background:repeating-linear-gradient(to right,#8a8a8a 0,#8a8a8a 1px,transparent 1px,transparent 2px)"></div>
<svg class="a" style="left:128px;top:711.0px;" width="14" height="16" viewBox="0 0 14 16"><path d="M0.5 0.5 H9.5 L13.5 4.5 V15.5 H0.5 Z" fill="#fff" stroke="#3d97d9" stroke-width="1"/><path d="M9.5 0.5 L13.5 4.5 H9.5 Z" fill="#3d97d9"/><circle cx="6.6" cy="7.6" r="1.6" fill="#2f7fc4"/><path d="M7.9 8 C7.8 10 6.8 11 5.2 11.5" fill="none" stroke="#2f7fc4" stroke-width="1.2"/></svg>
<div class="t" style="left:146.70px;top:714px;font-size:12.00px;line-height:12.00px;color:#3a3a3a;transform:scaleX(0.9937);">PhoneNumberType.csv</div>
<div class="a" style="left:111px;top:738.0px;width:11px;height:11px;background:#f0f0f0;"></div>
<div class="a" style="left:113px;top:743.0px;width:7px;height:1px;background:#6a6a6a;"></div>
<div class="a" style="left:116px;top:740.0px;width:1px;height:7px;background:#6a6a6a;"></div>
<div class="a" style="left:123px;top:743px;width:4px;height:1px;background:repeating-linear-gradient(to right,#8a8a8a 0,#8a8a8a 1px,transparent 1px,transparent 2px)"></div>
<svg class="a" style="left:128px;top:735.0px;" width="14" height="16" viewBox="0 0 14 16"><path d="M0.5 0.5 H9.5 L13.5 4.5 V15.5 H0.5 Z" fill="#fff" stroke="#3d97d9" stroke-width="1"/><path d="M9.5 0.5 L13.5 4.5 H9.5 Z" fill="#3d97d9"/><circle cx="6.6" cy="7.6" r="1.6" fill="#2f7fc4"/><path d="M7.9 8 C7.8 10 6.8 11 5.2 11.5" fill="none" stroke="#2f7fc4" stroke-width="1.2"/></svg>
<div class="t" style="left:146.70px;top:738px;font-size:12.00px;line-height:12.00px;color:#3a3a3a;transform:scaleX(0.9923);">StateProvince.csv</div>
<div class="a" style="left:316px;top:155px;width:15px;height:598px;background:#fafafa;"></div>
<svg class="a" style="left:318px;top:158px;" width="12" height="10" viewBox="0 0 12 10"><path d="M5.75 1.8 L10.2 8.5 H1.3 Z" fill="#8c8c8c" stroke="#8c8c8c" stroke-width="1" stroke-linejoin="round"/></svg>
<div class="a" style="left:319px;top:173px;width:9px;height:425px;background:#8c8c8c;border-radius:4.5px;"></div>
<svg class="a" style="left:318px;top:739px;" width="12" height="10" viewBox="0 0 12 10"><path d="M5.75 8.5 L10.2 1.8 H1.3 Z" fill="#8c8c8c" stroke="#8c8c8c" stroke-width="1" stroke-linejoin="round"/></svg>
<svg class="a" style="left:346px;top:96px;" width="16" height="12" viewBox="0 0 16 12"><path d="M1.6 5.9 C3.6 3.2 5.6 2.2 8 2.2 C10.4 2.2 12.4 3.2 14.4 5.9 C12.4 8.6 10.4 9.6 8 9.6 C5.6 9.6 3.6 8.6 1.6 5.9 Z" fill="none" stroke="#3a89cf" stroke-width="1.6"/><circle cx="8" cy="5.9" r="2.3" fill="#3a89cf"/><path d="M7 4.3 L8 5.6 L9.3 4" fill="none" stroke="#f4f4f4" stroke-width="0.7"/></svg>
<svg class="a" style="left:378px;top:94px;" width="15" height="15" viewBox="0 0 15 15"><circle cx="6" cy="6" r="5" fill="none" stroke="#3a89cf" stroke-width="1.8"/><path d="M9.4 9.9 L12.2 13.8" stroke="#3a89cf" stroke-width="2" stroke-linecap="round"/><rect x="3.2" y="5.1" width="5.6" height="1.9" fill="#3a89cf"/></svg>
<div class="t" style="left:403.20px;top:97px;font-size:11.80px;line-height:11.80px;color:#555;transform:scaleX(0.9231);">99%</div>
<svg class="a" style="left:439px;top:94px;" width="15" height="15" viewBox="0 0 15 15"><circle cx="6" cy="6" r="5" fill="none" stroke="#3a89cf" stroke-width="1.8"/><path d="M9.4 9.9 L12.2 13.8" stroke="#3a89cf" stroke-width="2" stroke-linecap="round"/><rect x="3.2" y="5.1" width="5.6" height="1.9" fill="#3a89cf"/><rect x="5.05" y="3.2" width="1.9" height="5.6" fill="#3a89cf"/></svg>
<svg class="a" style="left:467px;top:94px;" width="16.2" height="16.2" viewBox="0 0 16.2 16.2"><path d="M0.8 4.5 V0.8 H4.5 M11.7 0.8 H15.4 V4.5 M15.4 11.7 V15.4 H11.7 M4.5 15.4 H0.8 V11.7" fill="none" stroke="#3a89cf" stroke-width="1.5"/><path d="M3.5 3.5 L12.7 12.7 M12.7 3.5 L3.5 12.7" stroke="#3a89cf" stroke-width="2"/><path d="M3 3 H7 L3 7 Z M13.2 3 V7 L9.2 3 Z M13.2 13.2 H9.2 L13.2 9.2 Z M3 13.2 V9.2 L7 13.2 Z" fill="#3a89cf"/></svg>
<svg class="a" style="left:497px;top:94px;" width="16" height="16" viewBox="0 0 16 16"><path d="M8 0.5 L11 3.8 H9 V7 H12.2 V5 L15.5 8 L12.2 11 V9 H9 V12.2 H11 L8 15.5 L5 12.2 H7 V9 H3.8 V11 L0.5 8 L3.8 5 V7 H7 V3.8 H5 Z" fill="#3a89cf"/></svg>
<div class="a" style="left:516px;top:91px;width:22px;height:22px;background:#dcdcdc;border-radius:2px;"></div>
<svg class="a" style="left:520px;top:95px;" width="13.5" height="13.5" viewBox="0 0 13.5 13.5"><rect x="0.75" y="0.75" width="12" height="12" fill="none" stroke="#3a89cf" stroke-width="1.5" stroke-dasharray="3 2.2"/></svg>
<div class="a" style="left:546px;top:95px;width:1px;height:13px;background:#d8d8d8;"></div>
<svg class="a" style="left:558px;top:97px;" width="16" height="10" viewBox="0 0 16 10"><path d="M2.5 6.5 C5 2.5 11 1.5 14.5 8.5" fill="none" stroke="#3a89cf" stroke-width="2"/><path d="M0.8 1.8 L1.2 8.2 L6.8 7.2 Z" fill="#3a89cf"/></svg>
<svg class="a" style="left:588px;top:97px;" width="16" height="10" viewBox="0 0 16 10"><path d="M13.5 6.5 C11 2.5 5 1.5 1.5 8.5" fill="none" stroke="#a7cbe9" stroke-width="2"/><path d="M15.2 1.8 L14.8 8.2 L9.2 7.2 Z" fill="#a7cbe9"/></svg>
<div class="a" style="left:615px;top:95px;width:1px;height:13px;background:#d8d8d8;"></div>
<svg class="a" style="left:628px;top:95px;" width="13" height="13" viewBox="0 0 13 13"><path d="M4.6 0.5 H8.4 V4.6 H12.5 V8.4 H8.4 V12.5 H4.6 V8.4 H0.5 V4.6 H4.6 Z" fill="#3a89cf"/></svg>
<svg class="a" style="left:650.8px;top:99.5px;" width="9" height="6" viewBox="0 0 9 6"><path d="M0.8 1 L4.5 4.6 L8.2 1" fill="none" stroke="#a0a0a0" stroke-width="1.2"/></svg>
<svg class="a" style="left:701.8px;top:99.5px;" width="9" height="6" viewBox="0 0 9 6"><path d="M0.8 1 L4.5 4.6 L8.2 1" fill="none" stroke="#a0a0a0" stroke-width="1.2"/></svg>
<svg class="a" style="left:752.6px;top:99.5px;" width="9" height="6" viewBox="0 0 9 6"><path d="M0.8 1 L4.5 4.6 L8.2 1" fill="none" stroke="#a0a0a0" stroke-width="1.2"/></svg>
<svg class="a" style="left:803.6px;top:99.5px;" width="9" height="6" viewBox="0 0 9 6"><path d="M0.8 1 L4.5 4.6 L8.2 1" fill="none" stroke="#a0a0a0" stroke-width="1.2"/></svg>
<svg class="a" style="left:678px;top:95px;" width="15.5" height="13.5" viewBox="0 0 15.5 13.5"><rect x="0.6" y="0.6" width="4.2" height="4.2" fill="#c9e0f3" stroke="#3a89cf" stroke-width="1.2"/><rect x="0.6" y="8.2" width="4.2" height="4.2" fill="#c9e0f3" stroke="#3a89cf" stroke-width="1.2"/><rect x="10.2" y="4.4" width="4.2" height="4.2" fill="#c9e0f3" stroke="#3a89cf" stroke-width="1.2"/><path d="M4.8 2.7 H7.2 V10.3 H4.8 M7.2 6.5 H10.2" fill="none" stroke="#9a9a9a" stroke-width="1"/></svg>
<svg class="a" style="left:729px;top:94px;" width="16" height="16" viewBox="0 0 16 16"><rect x="0.5" y="0.5" width="15" height="15" fill="#fff" stroke="#b4b4b4" stroke-width="1"/><rect x="0.5" y="0.5" width="15" height="3.5" fill="#a9cdee" stroke="#3a89cf" stroke-width="1"/><path d="M5.5 4 V15.5 M10.5 4 V15.5" stroke="#b4b4b4" stroke-width="1"/></svg>
<svg class="a" style="left:780px;top:93.5px;" width="16" height="14" viewBox="0 0 16 14"><path d="M1.5 12 H7 V4 H12.5" fill="none" stroke="#3a89cf" stroke-width="2"/><path d="M11.5 0.8 L15.5 4 L11.5 7.2 Z M4.5 8.8 L0.5 12 L4.5 15.2 Z" fill="#3a89cf"/></svg>
<div class="t" style="left:836.20px;top:96px;font-size:12.00px;line-height:12.00px;color:#555;transform:scaleX(0.9548);">Diagram Properties</div>
<div class="a" style="left:1067px;top:88px;width:120px;height:27px;background:#ebebeb;border-radius:4px;"></div>
<svg class="a" style="left:1076px;top:94.5px;" width="14" height="16" viewBox="0 0 14 16"><circle cx="8" cy="6" r="4.6" fill="none" stroke="#3a89cf" stroke-width="1.7"/><path d="M4.8 9.3 L1.3 13.8" stroke="#3a89cf" stroke-width="2" stroke-linecap="round"/></svg>
<div class="t" style="left:1099.70px;top:96px;font-size:12.50px;line-height:12.50px;color:#b5b5b5;transform:scaleX(0.9950);">Quick find</div>
<svg class="a" style="left:1199px;top:94px;" width="15" height="14.5" viewBox="0 0 15 14.5"><rect x="3.5" y="0.5" width="8" height="2" fill="#7fb2df"/><path d="M0.5 6 C0.5 4.5 1.5 3.6 3 3.6 H12 C13.5 3.6 14.5 4.5 14.5 6 V11.5 H0.5 Z" fill="#3a89cf"/><rect x="3" y="8" width="9" height="6" fill="#fff" stroke="#3a89cf" stroke-width="1.2"/><rect x="4.8" y="10.3" width="5.4" height="1" fill="#3a89cf"/></svg>
<svg class="a" style="left:1242px;top:94px;" width="12" height="16" viewBox="0 0 12 16"><path d="M9.5 1.5 L3 8 L9.5 14.5" fill="none" stroke="#4d97d6" stroke-width="1.8"/></svg>
<div class="t" style="left:1256px;top:116.5px;font-size:15px;line-height:15px;color:#3a8bd2;font-weight:bold;transform-origin:0 0;transform:rotate(90deg) scaleX(0.907)">Details</div>
<div class="a" style="left:689px;top:160px;width:204px;height:145px;border:1.2px solid #333;border-radius:4px;background:#fff;box-sizing:border-box"></div>
<div class="a" style="left:689px;top:183px;width:204px;height:1.2px;background:#333;"></div>
<div class="a" style="left:689px;top:206px;width:204px;height:1.2px;background:#333;"></div>
<svg class="a" style="left:695px;top:164px;" width="14" height="16" viewBox="0 0 14 16"><path d="M0.5 0.5 H9.8 L13.5 4.2 V15.5 H0.5 Z" fill="#fff" stroke="#56a7e3" stroke-width="1"/><path d="M9.8 0.5 L13.5 4.2 H9.8 Z" fill="#56a7e3"/><circle cx="6.3" cy="7.4" r="1.5" fill="#2f7fc4"/><path d="M7.5 7.8 C7.4 9.6 6.5 10.6 5 11" fill="none" stroke="#2f7fc4" stroke-width="1.1"/></svg>
<div class="t" style="left:715.20px;top:167px;font-size:11.82px;line-height:11.82px;color:#000;transform:scaleX(0.9994);">EmployeeDepartmentHistory.csv</div>
<div class="t" style="left:699.60px;top:215px;font-size:11.82px;line-height:11.82px;color:#000;">BusinessEntityID</div>
<div class="t" style="left:797.70px;top:215px;font-size:10.50px;line-height:10.50px;color:#111;font-weight:bold;transform:scaleX(0.8562);">12</div>
<div class="t" style="left:699.60px;top:230px;font-size:11.82px;line-height:11.82px;color:#000;">DepartmentID</div>
<div class="t" style="left:797.70px;top:230px;font-size:10.50px;line-height:10.50px;color:#111;font-weight:bold;transform:scaleX(0.8562);">12</div>
<div class="t" style="left:699.60px;top:244px;font-size:11.82px;line-height:11.82px;color:#000;">EndDate</div>
<svg class="a" style="left:798.7px;top:244.0px;" width="10" height="10" viewBox="0 0 10 10"><circle cx="4.9" cy="4.9" r="4" fill="none" stroke="#111" stroke-width="1.2"/><path d="M4.9 2.4 V5.1 H7" fill="none" stroke="#111" stroke-width="1.1"/></svg>
<div class="t" style="left:699.60px;top:259px;font-size:11.82px;line-height:11.82px;color:#000;">ModifiedDate</div>
<svg class="a" style="left:798.7px;top:258.8px;" width="10" height="10" viewBox="0 0 10 10"><circle cx="4.9" cy="4.9" r="4" fill="none" stroke="#111" stroke-width="1.2"/><path d="M4.9 2.4 V5.1 H7" fill="none" stroke="#111" stroke-width="1.1"/></svg>
<div class="t" style="left:699.60px;top:274px;font-size:11.82px;line-height:11.82px;color:#000;">ShiftID</div>
<div class="t" style="left:797.70px;top:274px;font-size:10.50px;line-height:10.50px;color:#111;font-weight:bold;transform:scaleX(0.8562);">12</div>
<div class="t" style="left:699.60px;top:289px;font-size:11.82px;line-height:11.82px;color:#000;">StartDate</div>
<svg class="a" style="left:798.7px;top:288.4px;" width="10" height="10" viewBox="0 0 10 10"><circle cx="4.9" cy="4.9" r="4" fill="none" stroke="#111" stroke-width="1.2"/><path d="M4.9 2.4 V5.1 H7" fill="none" stroke="#111" stroke-width="1.1"/></svg>
<div class="a" style="left:920px;top:177px;width:140px;height:310px;border:1.2px solid #333;border-radius:4px;background:#fff;box-sizing:border-box"></div>
<div class="a" style="left:920px;top:200.5px;width:140px;height:1.2px;background:#333;"></div>
<div class="a" style="left:920px;top:223.5px;width:140px;height:1.2px;background:#333;"></div>
<svg class="a" style="left:926px;top:181px;" width="14" height="16" viewBox="0 0 14 16"><path d="M0.5 0.5 H9.8 L13.5 4.2 V15.5 H0.5 Z" fill="#fff" stroke="#56a7e3" stroke-width="1"/><path d="M9.8 0.5 L13.5 4.2 H9.8 Z" fill="#56a7e3"/><circle cx="6.3" cy="7.4" r="1.5" fill="#2f7fc4"/><path d="M7.5 7.8 C7.4 9.6 6.5 10.6 5 11" fill="none" stroke="#2f7fc4" stroke-width="1.1"/></svg>
<div class="t" style="left:946.20px;top:184px;font-size:11.82px;line-height:11.82px;color:#000;transform:scaleX(0.9963);">Employee.csv</div>
<div class="t" style="left:930.30px;top:232px;font-size:11.82px;line-height:11.82px;color:#000;">BirthDate</div>
<svg class="a" style="left:1036.8px;top:231.1px;" width="10" height="10" viewBox="0 0 10 10"><circle cx="4.9" cy="4.9" r="4" fill="none" stroke="#111" stroke-width="1.2"/><path d="M4.9 2.4 V5.1 H7" fill="none" stroke="#111" stroke-width="1.1"/></svg>
<div class="t" style="left:930.30px;top:246px;font-size:11.82px;line-height:11.82px;color:#000;">BusinessEntityID</div>
<div class="t" style="left:1035.80px;top:246px;font-size:10.50px;line-height:10.50px;color:#111;font-weight:bold;transform:scaleX(0.8562);">12</div>
<div class="t" style="left:930.30px;top:261px;font-size:11.82px;line-height:11.82px;color:#000;">CurrentFlag</div>
<div class="t" style="left:1035.80px;top:261px;font-size:10.50px;line-height:10.50px;color:#111;font-weight:bold;transform:scaleX(0.8562);">12</div>
<div class="t" style="left:930.30px;top:276px;font-size:11.82px;line-height:11.82px;color:#000;">Gender</div>
<div class="t" style="left:1035.80px;top:277px;font-size:10.00px;line-height:10.00px;color:#111;font-weight:bold;transform:scaleX(0.7270);">AB</div>
<div class="t" style="left:930.30px;top:291px;font-size:11.82px;line-height:11.82px;color:#000;">HireDate</div>
<svg class="a" style="left:1036.8px;top:290.78px;" width="10" height="10" viewBox="0 0 10 10"><circle cx="4.9" cy="4.9" r="4" fill="none" stroke="#111" stroke-width="1.2"/><path d="M4.9 2.4 V5.1 H7" fill="none" stroke="#111" stroke-width="1.1"/></svg>
<div class="t" style="left:930.30px;top:306px;font-size:11.82px;line-height:11.82px;color:#000;">JobTitle</div>
<div class="t" style="left:1035.80px;top:307px;font-size:10.00px;line-height:10.00px;color:#111;font-weight:bold;transform:scaleX(0.7270);">AB</div>
<div class="t" style="left:930.30px;top:321px;font-size:11.82px;line-height:11.82px;color:#000;">LoginID</div>
<div class="t" style="left:1035.80px;top:322px;font-size:10.00px;line-height:10.00px;color:#111;font-weight:bold;transform:scaleX(0.7270);">AB</div>
<div class="t" style="left:930.30px;top:336px;font-size:11.82px;line-height:11.82px;color:#000;">MaritalStatus</div>
<div class="t" style="left:1035.80px;top:337px;font-size:10.00px;line-height:10.00px;color:#111;font-weight:bold;transform:scaleX(0.7270);">AB</div>
<div class="t" style="left:930.30px;top:351px;font-size:11.82px;line-height:11.82px;color:#000;">ModifiedDate</div>
<div class="t" style="left:1035.80px;top:352px;font-size:10.00px;line-height:10.00px;color:#111;font-weight:bold;transform:scaleX(0.7270);">AB</div>
<div class="t" style="left:930.30px;top:366px;font-size:11.82px;line-height:11.82px;color:#000;">NationalIDNumber</div>
<div class="t" style="left:1035.80px;top:366px;font-size:10.50px;line-height:10.50px;color:#111;font-weight:bold;transform:scaleX(0.8562);">12</div>
<div class="t" style="left:930.30px;top:381px;font-size:11.82px;line-height:11.82px;color:#000;">OrganizationLevel</div>
<div class="t" style="left:1035.80px;top:381px;font-size:10.50px;line-height:10.50px;color:#111;font-weight:bold;transform:scaleX(0.8562);">12</div>
<div class="t" style="left:930.30px;top:396px;font-size:11.82px;line-height:11.82px;color:#000;">OrganizationNode</div>
<div class="t" style="left:1035.80px;top:397px;font-size:10.00px;line-height:10.00px;color:#111;font-weight:bold;transform:scaleX(0.7270);">AB</div>
<div class="t" style="left:930.30px;top:411px;font-size:11.82px;line-height:11.82px;color:#000;">SSN</div>
<div class="t" style="left:1035.80px;top:412px;font-size:10.00px;line-height:10.00px;color:#111;font-weight:bold;transform:scaleX(0.7270);">AB</div>
<div class="t" style="left:930.30px;top:425px;font-size:11.82px;line-height:11.82px;color:#000;">SalariedFlag</div>
<div class="t" style="left:1035.80px;top:425px;font-size:10.50px;line-height:10.50px;color:#111;font-weight:bold;transform:scaleX(0.8562);">12</div>
<div class="t" style="left:930.30px;top:440px;font-size:11.82px;line-height:11.82px;color:#000;">SickLeaveHours</div>
<div class="t" style="left:1035.80px;top:440px;font-size:10.50px;line-height:10.50px;color:#111;font-weight:bold;transform:scaleX(0.8562);">12</div>
<div class="t" style="left:930.30px;top:455px;font-size:11.82px;line-height:11.82px;color:#000;">VacationHours</div>
<div class="t" style="left:1035.80px;top:455px;font-size:10.50px;line-height:10.50px;color:#111;font-weight:bold;transform:scaleX(0.8562);">12</div>
<div class="t" style="left:930.30px;top:470px;font-size:11.82px;line-height:11.82px;color:#000;">rowguid</div>
<div class="t" style="left:1035.80px;top:471px;font-size:10.00px;line-height:10.00px;color:#111;font-weight:bold;transform:scaleX(0.7270);">AB</div>
<div class="a" style="left:469px;top:436px;width:132.5px;height:100.5px;border:1.2px solid #333;border-radius:4px;background:#fff;box-sizing:border-box"></div>
<div class="a" style="left:469px;top:459.3px;width:132.5px;height:1.2px;background:#333;"></div>
<div class="a" style="left:469px;top:482.3px;width:132.5px;height:1.2px;background:#333;"></div>
<svg class="a" style="left:475px;top:440px;" width="14" height="16" viewBox="0 0 14 16"><path d="M0.5 0.5 H9.8 L13.5 4.2 V15.5 H0.5 Z" fill="#fff" stroke="#56a7e3" stroke-width="1"/><path d="M9.8 0.5 L13.5 4.2 H9.8 Z" fill="#56a7e3"/><circle cx="6.3" cy="7.4" r="1.5" fill="#2f7fc4"/><path d="M7.5 7.8 C7.4 9.6 6.5 10.6 5 11" fill="none" stroke="#2f7fc4" stroke-width="1.1"/></svg>
<div class="t" style="left:495.20px;top:443px;font-size:11.82px;line-height:11.82px;color:#000;transform:scaleX(0.9946);">BusinessEntity.csv</div>
<div class="t" style="left:479.60px;top:491px;font-size:11.82px;line-height:11.82px;color:#000;">BusinessEntityID</div>
<div class="t" style="left:577.50px;top:491px;font-size:10.50px;line-height:10.50px;color:#111;font-weight:bold;transform:scaleX(0.8562);">12</div>
<div class="t" style="left:479.60px;top:506px;font-size:11.82px;line-height:11.82px;color:#000;">ModifiedDate</div>
<svg class="a" style="left:578.5px;top:505.4px;" width="10" height="10" viewBox="0 0 10 10"><circle cx="4.9" cy="4.9" r="4" fill="none" stroke="#111" stroke-width="1.2"/><path d="M4.9 2.4 V5.1 H7" fill="none" stroke="#111" stroke-width="1.1"/></svg>
<div class="t" style="left:479.60px;top:521px;font-size:11.82px;line-height:11.82px;color:#000;">rowguid</div>
<div class="t" style="left:577.50px;top:522px;font-size:10.00px;line-height:10.00px;color:#111;font-weight:bold;transform:scaleX(0.7270);">AB</div>
<div class="a" style="left:733.5px;top:448px;width:116.0px;height:115px;border:1.2px solid #333;border-radius:4px;background:#fff;box-sizing:border-box"></div>
<div class="a" style="left:733.5px;top:471px;width:116.0px;height:1.2px;background:#333;"></div>
<div class="a" style="left:733.5px;top:494.5px;width:116.0px;height:1.2px;background:#333;"></div>
<svg class="a" style="left:739.5px;top:452px;" width="14" height="16" viewBox="0 0 14 16"><path d="M0.5 0.5 H9.8 L13.5 4.2 V15.5 H0.5 Z" fill="#fff" stroke="#56a7e3" stroke-width="1"/><path d="M9.8 0.5 L13.5 4.2 H9.8 Z" fill="#56a7e3"/><circle cx="6.3" cy="7.4" r="1.5" fill="#2f7fc4"/><path d="M7.5 7.8 C7.4 9.6 6.5 10.6 5 11" fill="none" stroke="#2f7fc4" stroke-width="1.1"/></svg>
<div class="t" style="left:759.70px;top:455px;font-size:11.82px;line-height:11.82px;color:#000;transform:scaleX(0.9992);">Department.csv</div>
<div class="t" style="left:743.20px;top:503px;font-size:11.82px;line-height:11.82px;color:#000;">DepartmentID</div>
<div class="t" style="left:825.50px;top:503px;font-size:10.50px;line-height:10.50px;color:#111;font-weight:bold;transform:scaleX(0.8562);">12</div>
<div class="t" style="left:743.20px;top:518px;font-size:11.82px;line-height:11.82px;color:#000;">GroupName</div>
<div class="t" style="left:825.50px;top:519px;font-size:10.00px;line-height:10.00px;color:#111;font-weight:bold;transform:scaleX(0.7270);">AB</div>
<div class="t" style="left:743.20px;top:533px;font-size:11.82px;line-height:11.82px;color:#000;">ModifiedDate</div>
<svg class="a" style="left:826.5px;top:532.3px;" width="10" height="10" viewBox="0 0 10 10"><circle cx="4.9" cy="4.9" r="4" fill="none" stroke="#111" stroke-width="1.2"/><path d="M4.9 2.4 V5.1 H7" fill="none" stroke="#111" stroke-width="1.1"/></svg>
<div class="t" style="left:743.20px;top:548px;font-size:11.82px;line-height:11.82px;color:#000;">Name</div>
<div class="t" style="left:825.50px;top:548px;font-size:10.00px;line-height:10.00px;color:#111;font-weight:bold;transform:scaleX(0.7270);">AB</div>
<div class="a" style="left:501.3px;top:621.5px;width:132.2px;height:116.0px;border:1.2px solid #333;border-radius:4px;background:#fff;box-sizing:border-box"></div>
<div class="a" style="left:501.3px;top:645.3px;width:132.2px;height:1.2px;background:#333;"></div>
<div class="a" style="left:501.3px;top:668.3px;width:132.2px;height:1.2px;background:#333;"></div>
<svg class="a" style="left:507.3px;top:625.5px;" width="14" height="16" viewBox="0 0 14 16"><path d="M0.5 0.5 H9.8 L13.5 4.2 V15.5 H0.5 Z" fill="#fff" stroke="#56a7e3" stroke-width="1"/><path d="M9.8 0.5 L13.5 4.2 H9.8 Z" fill="#56a7e3"/><circle cx="6.3" cy="7.4" r="1.5" fill="#2f7fc4"/><path d="M7.5 7.8 C7.4 9.6 6.5 10.6 5 11" fill="none" stroke="#2f7fc4" stroke-width="1.1"/></svg>
<div class="t" style="left:527.50px;top:629px;font-size:11.82px;line-height:11.82px;color:#000;transform:scaleX(1.0015);">JobCandidate.csv</div>
<div class="t" style="left:511.70px;top:677px;font-size:11.82px;line-height:11.82px;color:#000;">BusinessEntityID</div>
<div class="t" style="left:609.30px;top:678px;font-size:10.00px;line-height:10.00px;color:#111;font-weight:bold;transform:scaleX(0.7270);">AB</div>
<div class="t" style="left:511.70px;top:692px;font-size:11.82px;line-height:11.82px;color:#000;">JobCandidateID</div>
<div class="t" style="left:609.30px;top:692px;font-size:10.50px;line-height:10.50px;color:#111;font-weight:bold;transform:scaleX(0.8562);">12</div>
<div class="t" style="left:511.70px;top:706px;font-size:11.82px;line-height:11.82px;color:#000;">ModifiedDate</div>
<svg class="a" style="left:610.3px;top:705.8px;" width="10" height="10" viewBox="0 0 10 10"><circle cx="4.9" cy="4.9" r="4" fill="none" stroke="#111" stroke-width="1.2"/><path d="M4.9 2.4 V5.1 H7" fill="none" stroke="#111" stroke-width="1.1"/></svg>
<div class="t" style="left:511.70px;top:721px;font-size:11.82px;line-height:11.82px;color:#000;">Resume</div>
<div class="t" style="left:609.30px;top:722px;font-size:10.00px;line-height:10.00px;color:#111;font-weight:bold;transform:scaleX(0.7270);">AB</div>
<div class="a" style="left:790.5px;top:304px;width:1.2px;height:128px;background:#7a7a7a;"></div>
<svg class="a" style="left:785px;top:430px;" width="12" height="17" viewBox="0 0 12 17"><path d="M6 0.5 L11 8 L6 15.5 L1 8 Z" fill="#666"/></svg>
<div class="t" style="left:501.20px;top:360px;font-size:11.82px;line-height:11.82px;color:#111;transform:scaleX(1.0026);">Department.csv to EmployeeDepartmentHistory.csv</div>
<svg class="a" style="left:335px;top:120px;pointer-events:none" width="890" height="633" viewBox="0 0 890 633"><path d="M446.8 74.1 C 246.84 118.19, 272.43 157.16, 218.9 334.5" fill="none" stroke="#e3101c" stroke-width="2.5" stroke-linecap="butt"/></svg>
<div class="a" style="left:791.6px;top:232.4px;width:177.2px;height:159.6px;background:#fff;box-shadow:0 1px 4px rgba(0,0,0,0.3)"></div>
<div class="t" style="left:802.90px;top:244px;font-size:11.50px;line-height:11.50px;color:#4a9ad6;font-weight:bold;transform:scaleX(0.8808);">CHOOSE RELATIONSHIP TYPE</div>
<div class="t" style="left:802.90px;top:268px;font-size:13.00px;line-height:13.00px;color:#222;transform:scaleX(0.9483);">Graphical Only Relationship</div>
<div class="a" style="left:791.6px;top:288px;width:177.2px;height:1px;background:#e2e2e2;"></div>
<div class="t" style="left:802.90px;top:302px;font-size:11.50px;line-height:11.50px;color:#4a9ad6;font-weight:bold;transform:scaleX(0.8843);">BINARY RELATIONSHIPS</div>
<div class="t" style="left:802.90px;top:326px;font-size:13.00px;line-height:13.00px;color:#222;transform:scaleX(0.9604);">Entity Relationship</div>
<div class="t" style="left:802.90px;top:350px;font-size:13.00px;line-height:13.00px;color:#222;transform:scaleX(0.9665);">Replication Link</div>
<div class="t" style="left:802.90px;top:374px;font-size:13.00px;line-height:13.00px;color:#222;transform:scaleX(0.9431);">Semantic Link</div>
<div class="a" style="left:331px;top:394px;width:4px;height:48px;background:#999;"></div>
<svg class="a" style="left:331px;top:412px;" width="4" height="10" viewBox="0 0 4 10"><path d="M4 0 L0 5 L4 10 Z" fill="#444"/></svg>
<div class="a" style="left:1225px;top:394px;width:4px;height:48px;background:#999;"></div>
<svg class="a" style="left:1225px;top:412px;" width="4" height="10" viewBox="0 0 4 10"><path d="M4 0 L0 5 L4 10 Z" fill="#444"/></svg>
<div class="a" style="left:0px;top:752px;width:1267px;height:1px;background:#1b2f4a;"></div>
<svg class="a" style="left:0px;top:743px;" width="10" height="10" viewBox="0 0 10 10"><path d="M0 0 V10 H10 V9 C4 9 1 6 1 0 Z" fill="#1b2f4a"/></svg>
<svg class="a" style="left:1257px;top:743px;" width="10" height="10" viewBox="0 0 10 10"><path d="M10 0 V10 H0 V9 C6 9 9 6 9 0 Z" fill="#3b4b63"/></svg>
</body></html>
